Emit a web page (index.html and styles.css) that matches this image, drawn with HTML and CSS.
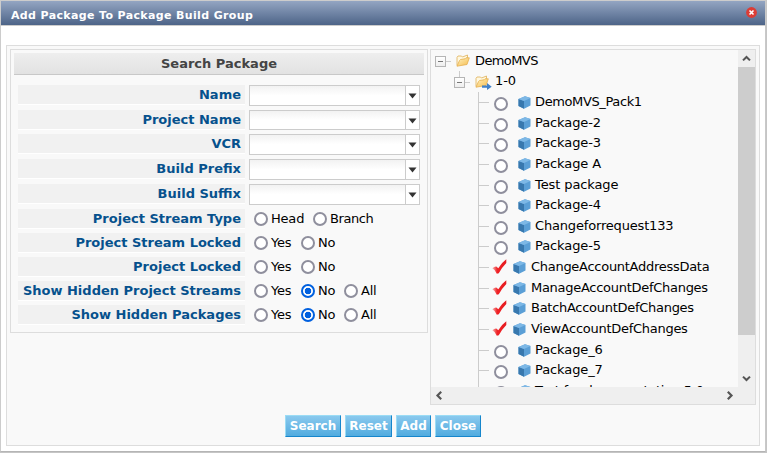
FILE: index.html
```
<!DOCTYPE html>
<html lang="en">
<head>
<meta charset="utf-8">
<title>Add Package To Package Build Group</title>
<link rel="stylesheet" href="styles.css">
</head>
<body>
<svg class="defs" width="0" height="0">
  <defs>
    <linearGradient id="fold" x1="0" y1="0" x2="1" y2="1"><stop offset="0" stop-color="#fff0bd"/><stop offset="1" stop-color="#f5bd50"/></linearGradient>
    <linearGradient id="red" x1="0" y1="0" x2="1" y2="0"><stop offset="0" stop-color="#f4b7b5"/><stop offset=".35" stop-color="#f02226"/><stop offset="1" stop-color="#e51b20"/></linearGradient>
    <symbol id="cube" viewBox="0 0 13 13"><path d="M.5 3 7 .3l5.500 1.700v7.500L6 12.700.5 10z" fill="#5b9fd6"/><path d="M.5 3 6 5v7.700L.5 10z" fill="#3878ae"/><path d="M.5 3 7 .3l5.500 1.700L6 5z" fill="#7db8e6"/></symbol>
    <symbol id="folder" viewBox="0 0 14 13"><path d="M1 11.500V3.500L2 2h3.500l1 1L11.500 1v3" fill="#fff8e0" stroke="#e2b765" stroke-width=".9"/><path d="M1 12.200 3.500 6.500 4.500 5.500 9 4.800l1-1h3.300L11 10.500z" fill="url(#fold)" stroke="#e5ae4e" stroke-width=".8"/></symbol>
    <symbol id="check" viewBox="0 0 15 15"><path d="M.3 9.300Q2.500 7.300 4.300 7.500L6.300 9.300Q9 4 14.300 .2V4Q9.800 8.500 6.800 14.300L4.800 14.800Q3.500 10.800.3 9.300z" fill="url(#red)"/></symbol>
  </defs>
</svg>
<div class="window">
  <header class="titlebar">
    <h1>Add Package To Package Build Group</h1>
    <svg class="close" viewBox="0 0 11 11"><circle cx="5.500" cy="5.500" r="5.400" fill="#dc3d36"/><path d="M3.500 3.500l4 4m0-4l-4 4" stroke="#fff" stroke-width="1.600"/></svg>
  </header>
  <main class="content">
    <div class="columns">
      <section class="search">
        <h2><span>Search Package</span></h2>
        <div class="form" id="form"></div>
      </section>
      <section class="browser">
        <div class="tree" id="tree"></div>
        <div class="vbar"><svg viewBox="0 0 17 18"><path d="M4.800 11 8.500 7.300l3.700 3.700"/></svg><i class="thumb"></i><svg viewBox="0 0 17 18"><path d="M4.800 7 8.500 10.700 12.200 7"/></svg></div>
        <div class="hbar"><svg viewBox="0 0 17 17"><path d="M10.200 4.800 6.500 8.500l3.700 3.700"/></svg><svg viewBox="0 0 17 17"><path d="M6.800 4.800 10.500 8.500 6.800 12.200"/></svg></div>
        <div class="corner"></div>
      </section>
    </div>
    <div class="actions"><button class="b-search"><span>Search</span></button><button class="b-reset"><span>Reset</span></button><button class="b-add"><span>Add</span></button><button class="b-close"><span>Close</span></button></div>
  </main>
</div>
<script src="app.js"></script>
</body>
</html>
```
FILE: styles.css
```
* { box-sizing: border-box; }
body { margin: 0; width: 767px; height: 453px; overflow: hidden; background: #c5c5c5; font: 13px/19px "DejaVu Sans", Verdana, sans-serif; color: #000; }
.defs { position: absolute; }
svg { display: block; flex: none; }
h1, h2 { margin: 0; white-space: nowrap; }
.window { width: 766px; height: 452px; background: #fff; border: 1px solid #ccc; border-bottom-color: #b5b5b5; border-right-color: #c9c9c9; }
.titlebar { height: 25px; display: flex; justify-content: space-between; padding: 4px 8px 0 10px; background: linear-gradient(#93a5c2, #4d6488); border-bottom: 1px solid #ccc; }
h1 { font-size: 11px; line-height: 21px; letter-spacing: .36px; color: #fff; }
.close { width: 11px; height: 11px; margin-top: 2px; }
.content { margin: 19px 5px 0; height: 401px; background: #f9f9f9; border: 1px solid #ddd; padding: 3px; }
.columns { display: flex; gap: 2px; align-items: flex-start; height: 356px; }
.search { width: 418px; height: 284px; border: 1px solid #ddd; padding: 3px; }
h2 { height: 22px; font-size: 13px; line-height: 21px; text-align: center; color: #444; background: linear-gradient(#eee, #e2e2e2); border-bottom: 1px solid #c8c8c8; }
.form { padding: 10px 4px 0; }
.row { display: flex; gap: 4px; height: 24px; }
.row.tall { height: 25px; }
.label { width: 227px; height: 20px; padding-right: 4px; text-align: right; font-weight: bold; color: #06518d; background: #f1f1f1; border-bottom: 1px solid #fff; white-space: nowrap; }
.combo { width: 171px; height: 21px; border: 1px solid #ccc; display: flex; background: linear-gradient(#f2f2f2, #fff 50%); }
.combo.short { height: 20px; }
.arrow { margin-left: auto; width: 14px; border-left: 1px solid #ccc; display: flex; padding: 7px 0 0 2px; background: #fff; }
.arrow svg { width: 9px; height: 6px; }
.options { display: flex; padding: 3px 0 0 5px; }
.opt { display: flex; gap: 3px; }
.opt span { line-height: 14px; white-space: nowrap; letter-spacing: -.2px; }
.branch span { letter-spacing: -.4px; }
.radio { width: 14px; height: 14px; flex: none; border: 2px solid #8f8f9d; border-radius: 50%; background: #fff; }
.radio.on { border-color: #0060df; background: radial-gradient(circle, #0060df 3px, #fff 3.6px); }
.yes { width: 47px; } .no { width: 43px; } .head { width: 59px; }
.browser { width: 326px; height: 356px; border: 1px solid #ddd; display: grid; grid-template: 337px 17px / 307px 17px; background: #efefef; }
.tree { overflow: hidden; background: #f9f9f9; }
.node { display: flex; height: 20.650px; white-space: nowrap; }
.node span { line-height: 21px; letter-spacing: -.1px; }
.expander { width: 11px; height: 11px; border: 1px solid #b5b5b5; background: linear-gradient(#fff, #eee); padding: 4px 2px; flex: none; position: relative; }
.expander i { display: block; height: 1px; background: #777; }
.child .expander::before { content: ""; position: absolute; left: 4px; bottom: 10px; width: 1px; height: 6px; background: #ccc; }
.stub { width: 5px; height: 1px; background: #ccc; flex: none; }
.root { padding-left: 4px; height: 21px; }
.root .expander, .child .expander { margin-top: 6px; }
.root .stub, .child .stub { margin-top: 11px; }
.root span { letter-spacing: -.6px; }
.folder { width: 14px; height: 13px; margin: 4px 5px 0 5px; }
.child { padding-left: 23px; height: 20px; }
.child span { line-height: 20px; }
.linked { width: 17px; height: 15px; margin: 4px 3px 0 5px; }
.packages { margin-left: 47px; border-left: 1px solid #ccc; margin-top: 1px; }
.packages .stub { width: 10px; margin-top: 10px; }
.packages .radio { margin: 5px 10px 0 5px; }
.cube { width: 13px; height: 13px; margin: 4px 4px 0 0; }
.check { width: 15px; height: 15px; margin: 2px 6px 0 3px; }
.picked .cube { margin-right: 5px; }
.packages span { line-height: 19px; }
.packages .picked span { letter-spacing: -.28px; }
.packages .node:first-child span { letter-spacing: -.38px; }
.packages .node:nth-child(7) span { letter-spacing: -.17px; }
.packages .node:last-child span { letter-spacing: -.24px; }
.vbar { display: flex; flex-direction: column; }
.vbar svg { width: 17px; height: 17px; }
.thumb { height: 268px; background: #cdcdcd; }
.vbar svg:last-child { margin-top: auto; }
.vbar path, .hbar path { fill: none; stroke: #555; stroke-width: 2.200; }
.hbar { display: flex; justify-content: space-between; }
.hbar svg { width: 17px; height: 17px; }
.actions { display: flex; gap: 4px; margin: 10px 0 0 275px; }
button { height: 22px; padding: 0; border: 1px solid #9bdcf5; border-right-color: #1686cc; border-bottom-color: #1686cc; background: linear-gradient(#8ac9ee, #51abdf); color: #fff; font: bold 12px/20px "DejaVu Sans", sans-serif; text-align: center; white-space: nowrap; }
.b-search { width: 56px; } .b-reset { width: 47px; } .b-add { width: 35px; } .b-close { width: 46px; }
```
FILE: app.js
```
const combos = ["Name", "Project Name", "VCR", "Build Prefix", "Build Suffix"];
const radios = [["Project Stream Type", ["Head", "Branch"]], ["Project Stream Locked", ["Yes", "No"]], ["Project Locked", ["Yes", "No"]],
  ["Show Hidden Project Streams", ["Yes", "No", "All"]], ["Show Hidden Packages", ["Yes", "No", "All"]]];
const packages = ["DemoMVS_Pack1", "Package-2", "Package-3", "Package A", "Test package", "Package-4", "Changeforrequest133", "Package-5",
  "ChangeAccountAddressData", "ManageAccountDefChanges", "BatchAccountDefChanges", "ViewAccountDefChanges", "Package_6", "Package_7", "Test for documentation 5.0"];

const label = t => `<div class="label"><span>${t}</span></div>`;
document.getElementById("form").innerHTML =
  combos.map((t, i) => `<div class="row ${i === 1 ? "" : "tall"}">${label(t)}<div class="combo ${i === 1 ? "short" : ""}"><div class="arrow"><svg viewBox="0 0 9 6"><path d="M.5.5h8L4.500 5.500z" fill="#333"/></svg></div></div></div>`).join("") +
  radios.map(([t, opts]) => `<div class="row">${label(t)}<div class="options">${opts.map(o =>
    `<div class="opt ${o.toLowerCase()}"><i class="radio ${opts.length === 3 && o === "No" ? "on" : ""}"></i><span>${o}</span></div>`).join("")}</div></div>`).join("");

const cube = '<svg class="cube"><use href="#cube"/></svg>';
document.getElementById("tree").innerHTML =
  `<div class="node root"><div class="expander"><i></i></div><i class="stub"></i><svg class="folder"><use href="#folder"/></svg><span>DemoMVS</span></div>
  <div class="node child"><div class="expander"><i></i></div><i class="stub"></i><svg class="linked" viewBox="0 0 17 15"><use href="#folder" width="14" height="13"/><path d="M7 10.500h5V8l4.700 3.700L12 15v-2.200H7z" fill="#3f80c8"/></svg><span>1-0</span></div>
  <div class="packages">` +
  packages.map((t, i) => i >= 8 && i <= 11
    ? `<div class="node picked"><i class="stub"></i><svg class="check"><use href="#check"/></svg>${cube}<span>${t}</span></div>`
    : `<div class="node"><i class="stub"></i><i class="radio"></i>${cube}<span>${t}</span></div>`).join("") + "</div>";
```
